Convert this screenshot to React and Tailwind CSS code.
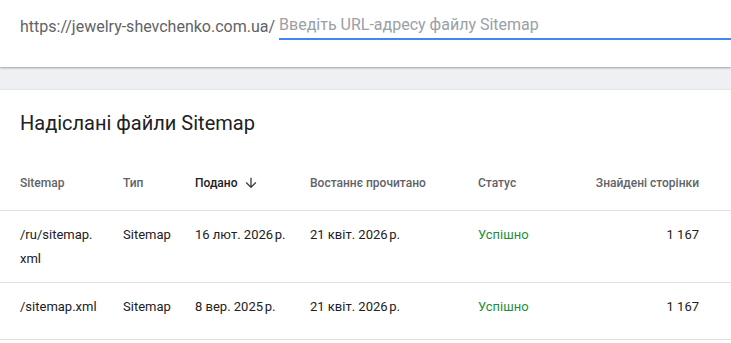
import React from "react";

const rows = [
  { path: <>/ru/sitemap.<wbr />xml</>, type: "Sitemap", sent: "16 лют. 2026\u202Fр.", read: "21 квіт. 2026\u202Fр.", status: "Успішно", pages: "1 167", tall: true },
  { path: "/sitemap.xml", type: "Sitemap", sent: "8 вер. 2025\u202Fр.", read: "21 квіт. 2026\u202Fр.", status: "Успішно", pages: "1 167" },
];

const grid = "grid grid-cols-[103px_72px_115px_168px_1fr_auto] pl-[20px] pr-[32px]";

export default function App() {
  return (
    <div className="w-[731px] h-[343px] overflow-hidden bg-white font-['Roboto',sans-serif]">
      {/* submit sitemap bar */}
      <div className="relative z-10 h-[67px] bg-white shadow-[0_1px_2px_rgba(60,64,67,0.45)]">
        <div className="flex items-end pl-[20px] pt-[13px]">
          <span className="text-[16px] leading-[24px] text-[#5f6368] pb-[1px]">https://jewelry-shevchenko.com.ua/</span>
          <div className="flex-1 ml-[4px] border-b-2 border-[#4285f4]">
            <input
              className="w-full outline-none text-[16px] leading-[24px] text-[#202124] placeholder:text-[#9aa0a6] pb-[1px]"
              placeholder="Введіть URL-адресу файлу Sitemap"
            />
          </div>
        </div>
      </div>
      <div className="h-[23px] bg-[#eef0f4] border-b border-[#e3e5e8]" />

      {/* submitted sitemaps card */}
      <div className="bg-white">
        <h2 className="pl-[20px] pt-[19px] pb-[17px] text-[20px] leading-[28px] text-[#202124]">
          Надіслані файли Sitemap
        </h2>
        <div className={`${grid} h-[57px] pt-[1px] items-center text-[12px] font-medium text-[#5f6368] border-b border-[#e0e0e0]`}>
          <div>Sitemap</div>
          <div>Тип</div>
          <div className="flex items-center gap-[6px] text-[#202124]">
            Подано
            <svg width="16" height="16" viewBox="0 0 24 24" className="fill-[#3c4043]">
              <path d="M20 12l-1.41-1.41L13 16.17V4h-2v12.17l-5.58-5.59L4 12l8 8 8-8z" />
            </svg>
          </div>
          <div>Востаннє прочитано</div>
          <div>Статус</div>
          <div className="text-right">Знайдені сторінки</div>
        </div>
        {rows.map((r, i) => (
          <div
            key={i}
            className={`${grid} ${r.tall ? "pb-[11px]" : "h-[57px]"} pt-[12px] text-[13px] leading-[24px] text-[#202124] border-b border-[#e0e0e0]`}
          >
            <div className="pr-[20px]">{r.path}</div>
            <div>{r.type}</div>
            <div>{r.sent}</div>
            <div>{r.read}</div>
            <div className="text-[#1e8e3e]">{r.status}</div>
            <div className="text-right">{r.pages}</div>
          </div>
        ))}
      </div>
    </div>
  );
}
